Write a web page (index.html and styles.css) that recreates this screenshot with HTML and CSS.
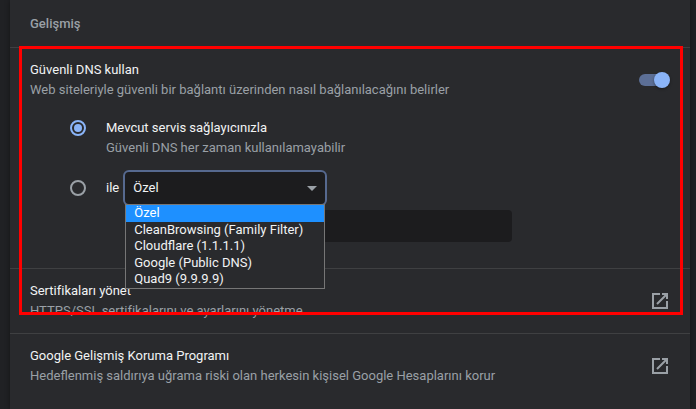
FILE: index.html
```html
<!DOCTYPE html>
<html lang="tr">
<head>
<meta charset="utf-8">
<meta name="viewport" content="width=device-width, initial-scale=1">
<title>Gelişmiş</title>
<link rel="stylesheet" href="styles.css">
</head>
<body>
<main class="card">
  <h1 class="heading">Gelişmiş</h1>

  <section class="row dns">
    <div class="row-main">
      <label class="text" for="secure-dns">
        <span class="title">Güvenli DNS kullan</span>
        <span class="note">Web siteleriyle güvenli bir bağlantı üzerinden nasıl bağlanılacağını belirler</span>
      </label>
      <input class="toggle" type="checkbox" role="switch" id="secure-dns" checked>
    </div>

    <div class="choices">
      <div class="choice">
        <input class="radio" type="radio" name="provider" id="provider-current" checked>
        <label class="text" for="provider-current">
          <span class="title">Mevcut servis sağlayıcınızla</span>
          <span class="note">Güvenli DNS her zaman kullanılamayabilir</span>
        </label>
      </div>
      <div class="choice choice-custom">
        <input class="radio" type="radio" name="provider" id="provider-custom">
        <label class="title" for="provider-custom" id="provider-label">ile</label>
        <div class="picker">
          <select class="select" aria-labelledby="provider-label">
            <option>Özel</option>
            <option>CleanBrowsing (Family Filter)</option>
            <option>Cloudflare (1.1.1.1)</option>
            <option>Google (Public DNS)</option>
            <option>Quad9 (9.9.9.9)</option>
          </select>
          <svg class="arrow" viewBox="0 0 10 5" aria-hidden="true"><path d="M0 0h10L5 5z"/></svg>
          <ul class="menu" role="listbox">
            <li class="option selected" role="option" aria-selected="true">Özel</li>
            <li class="option" role="option">CleanBrowsing (Family Filter)</li>
            <li class="option" role="option">Cloudflare (1.1.1.1)</li>
            <li class="option" role="option">Google (Public DNS)</li>
            <li class="option" role="option">Quad9 (9.9.9.9)</li>
          </ul>
        </div>
      </div>
      <input class="address" type="text" aria-labelledby="provider-label">
    </div>
  </section>

  <a class="row link" href="#certificates">
    <span class="text">
      <span class="title">Sertifikaları yönet</span>
      <span class="note">HTTPS/SSL sertifikalarını ve ayarlarını yönetme</span>
    </span>
    <svg class="open" viewBox="0 0 16 16" aria-hidden="true"><path d="M8 1H1v14h14V8M10 1h5v5M15 1L5 11"/></svg>
  </a>

  <a class="row link" href="#protection">
    <span class="text">
      <span class="title">Google Gelişmiş Koruma Programı</span>
      <span class="note">Hedeflenmiş saldırıya uğrama riski olan herkesin kişisel Google Hesaplarını korur</span>
    </span>
    <svg class="open" viewBox="0 0 16 16" aria-hidden="true"><path d="M8 1H1v14h14V8M10 1h5v5M15 1L5 11"/></svg>
  </a>

  <div class="highlight"></div>
</main>
</body>
</html>
```
FILE: styles.css
```css
* {
  box-sizing: border-box;
}

body {
  margin: 0;
  padding: 0 6px 0 10px;
  background: #202124;
  color: #e8eaed;
  font: 13px/20px Roboto, "Liberation Sans", sans-serif;
}

.card {
  position: relative;
  min-height: 100vh;
  background: #292a2d;
  box-shadow: 0 0 5px rgba(0, 0, 0, 0.4);
}

.heading {
  margin: 0;
  padding: 14px 20px 13px;
  color: #9aa0a6;
  font-size: 13px;
  font-weight: 500;
}

.row {
  border-top: 1px solid #3f4042;
  padding: 12px 20px;
}

.row-main,
.link {
  display: flex;
  align-items: center;
  justify-content: space-between;
}

.text {
  display: flex;
  flex-direction: column;
}

.title {
  color: #f1f3f4;
}

.note {
  color: #9aa0a6;
}

.toggle {
  appearance: none;
  position: relative;
  width: 28px;
  height: 12px;
  margin: 0 3px 0 0;
  border-radius: 6px;
  background: #5c6f96;
}

.toggle::after {
  content: "";
  position: absolute;
  top: -2px;
  right: -3px;
  width: 16px;
  height: 16px;
  border-radius: 50%;
  background: #8ab4f8;
  box-shadow: 0 1px 3px rgba(0, 0, 0, 0.4);
}

.choices {
  display: flex;
  flex-direction: column;
  padding: 18px 0 14px 40px;
}

.choice {
  display: flex;
  align-items: flex-start;
  gap: 20px;
}

.radio {
  appearance: none;
  display: grid;
  place-items: center;
  flex: none;
  width: 16px;
  height: 16px;
  margin: 2px 0 0;
  border: 2px solid #9aa0a6;
  border-radius: 50%;
}

.radio:checked {
  border-color: #8ab4f8;
}

.radio:checked::after {
  content: "";
  width: 8px;
  height: 8px;
  border-radius: 50%;
  background: #8ab4f8;
}

.choice-custom {
  align-items: center;
  padding-top: 12px;
}

.choice-custom .radio {
  margin: 0;
}

.picker {
  position: relative;
  width: 204px;
  margin-left: -16px;
}

.select {
  appearance: none;
  display: block;
  width: 100%;
  height: 36px;
  padding: 0 8px;
  border: 2px solid #56698f;
  border-radius: 6px;
  outline: none;
  background: #1c1c1e;
  color: #f1f3f4;
  font: inherit;
}

.arrow {
  position: absolute;
  top: 16px;
  right: 10px;
  width: 10px;
  height: 5px;
  fill: #9aa0a6;
}

.menu {
  position: absolute;
  z-index: 1;
  top: 34px;
  left: 2px;
  right: 2px;
  display: grid;
  grid-auto-rows: 1fr;
  height: 85px;
  margin: 0;
  padding: 0;
  border: 1px solid #767676;
  background: #292a2d;
  color: #f1f3f4;
  list-style: none;
}

.option {
  padding: 0 8px;
  line-height: 16px;
}

.selected {
  background: #1e90ff;
  color: #fff;
}

.address {
  width: calc(100% - 56px);
  max-width: 386px;
  height: 32px;
  margin: 4px 0 0 56px;
  padding: 0 8px;
  border: 0;
  border-radius: 4px;
  background: #1c1c1e;
  color: #e8eaed;
  font: inherit;
}

.link {
  color: inherit;
  text-decoration: none;
}

.open {
  flex: none;
  width: 16px;
  height: 16px;
  margin-right: 2px;
  fill: none;
  stroke: #9aa0a6;
  stroke-width: 2;
}

.highlight {
  position: absolute;
  z-index: 2;
  top: 46px;
  left: 9px;
  right: 7px;
  height: 269px;
  border: 3px solid #f00;
  pointer-events: none;
}
```
